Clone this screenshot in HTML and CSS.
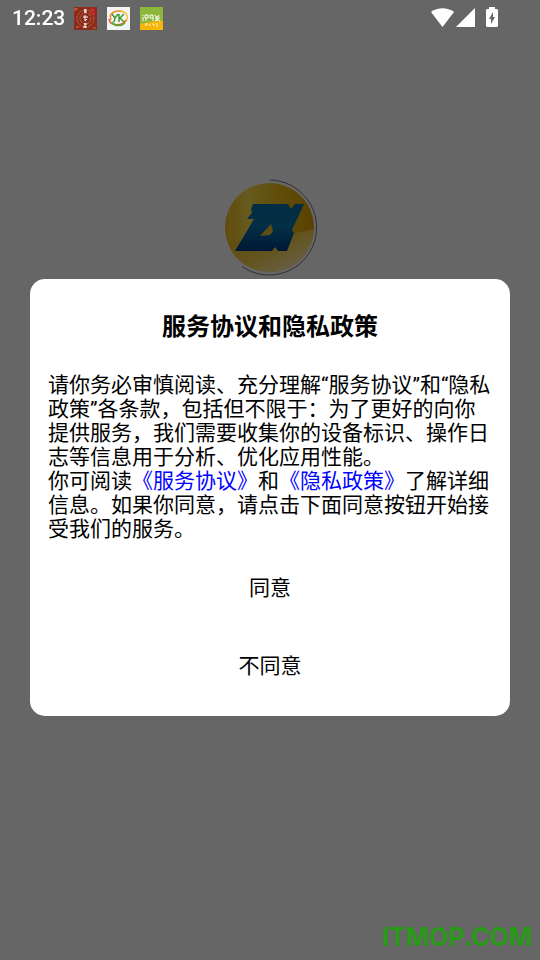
FILE: index.html
```
<!DOCTYPE html>
<html lang="zh-CN">
<head>
    <meta charset="UTF-8">
    <meta name="viewport" content="width=device-width, initial-scale=1.0">
    <title>服务协议和隐私政策</title>
    <link rel="stylesheet" href="styles.css">
</head>
<body>
    <main class="splash">
        <svg class="logo" viewBox="0 0 100 100" aria-hidden="true">
            <defs>
                <linearGradient id="gold" x1="0" y1="0" x2="1" y2="0">
                    <stop offset="0" stop-color="#f0b81c"/>
                    <stop offset=".25" stop-color="#ffe24a"/>
                    <stop offset=".6" stop-color="#f2c21c"/>
                    <stop offset="1" stop-color="#e0a400"/>
                </linearGradient>
                <linearGradient id="shine" x1="0" y1="0" x2="1" y2="1">
                    <stop offset="0" stop-color="#f0b000"/>
                    <stop offset=".5" stop-color="#f8d450"/>
                    <stop offset=".75" stop-color="#ffe9a0"/>
                    <stop offset="1" stop-color="#e89a20"/>
                </linearGradient>
                <linearGradient id="blue" x1="0" y1="0" x2="0" y2="1">
                    <stop offset="0" stop-color="#0870a8"/>
                    <stop offset=".5" stop-color="#0874ac"/>
                    <stop offset="1" stop-color="#003c88"/>
                </linearGradient>
                <clipPath id="disc"><circle cx="49.500" cy="49.500" r="44.500"/></clipPath>
            </defs>
            <circle cx="49.500" cy="49.500" r="44.500" fill="url(#gold)"/>
            <g clip-path="url(#disc)">
                <path d="M0 67C30 60 66 60 100 49V100H0z" fill="url(#shine)"/>
                <path d="M10 20V62" stroke="#fff0a0" stroke-width="1" opacity=".5"/>
            </g>
            <path d="M33 26H68L71 31L75 26H84L72 52L74 55L67 73H58L55 69L52 73H15L34 41H27L30 37L32 35L31 31z" fill="url(#blue)"/>
            <path d="M51 46L53 53L50 57L40 58z" fill="#f0c030"/>
            <path d="M50 2A47.500 47.500 0 1 1 22 88.500" fill="none" stroke="#77727a" stroke-width="1"/>
        </svg>
    </main>

    <header class="status-bar">
        <span class="time">12:23</span>
        <div class="notifications">
            <svg viewBox="0 0 23 23" aria-hidden="true">
                <rect width="23" height="23" fill="#8c2b1c"/>
                <g fill="none" stroke="#b96a4c">
                    <circle cx="11.500" cy="11.500" r="8.500" stroke-dasharray="2 1"/>
                    <circle cx="11.500" cy="11.500" r="5.500" stroke-dasharray="3 1"/>
                </g>
                <path d="M1 2h3M1 1v3M19 21h3M2 20h3" stroke="#c87844"/>
                <path d="M10 3h3M11 2v4M10 5h3M9 10h5M11 8v6M13 12l-2 2M10 17h3M9 20h4M11 16v5" stroke="#fff"/>
                <path d="M17 2h3v2h-3zM16 6h2v2M20 5v3" stroke="#ed2936" fill="none"/>
            </svg>
            <svg viewBox="0 0 23 23" aria-hidden="true">
                <rect width="23" height="23" fill="#f4f4f4"/>
                <g fill="none" stroke-width="1.500">
                    <path d="M4 13C1 6 9 2 17 5" stroke="#f08a24"/>
                    <path d="M14 4C21 5 22 12 18 15" stroke="#f5c535"/>
                    <path d="M2 12C3 20 16 19 19 13" stroke="#e9582b"/>
                    <path d="M5 15C8 20 15 19 18 16" stroke="#4daa36"/>
                    <path d="M5 7L8 11L11 7M8 11L7 15M12 7V15M17 7L13 11L17 15" stroke="#3d9b2f"/>
                </g>
            </svg>
            <svg viewBox="0 0 23 23" aria-hidden="true">
                <rect width="23" height="23" fill="#8db73b"/>
                <path d="M0 17C8 16 15 13 23 14V23H0z" fill="#f5b60b"/>
                <path d="M3 8v1M3 10v4M5 8h3v3H5zM6 11v3M10 8h3v6M10 11h3M10 8v3M15 8l1 2M19 8l-1 2M15 11h5M17 9v5M15 14l2-2 3 2" fill="none" stroke="#fff"/>
                <path d="M5 17h3M6 17v2M9 17l2 2M12 17h2v2M16 17h2M16 19h2" fill="none" stroke="#ffeec0"/>
            </svg>
        </div>
        <div class="indicators">
            <svg class="wifi" viewBox="0 0 23 19" aria-hidden="true">
                <path d="M0 4C7-1 16-1 23 4L11.500 19z" fill="#fff"/>
            </svg>
            <svg class="signal" viewBox="0 0 19 19" aria-hidden="true">
                <path d="M19 0V19H0z" fill="#fff"/>
            </svg>
            <svg class="battery" viewBox="0 0 12 20" aria-hidden="true">
                <path d="M3 2V0H9V2H11L12 3V19L11 20H1L0 19V3L1 2z" fill="#fff"/>
                <path d="M7 5L3 12H5V17L9 10H7z" fill="#666"/>
            </svg>
        </div>
    </header>

    <div class="overlay">
        <section class="dialog" role="dialog" aria-modal="true" aria-labelledby="dialogTitle">
            <h1 class="dialog-title" id="dialogTitle">服务协议和隐私政策</h1>
            <div class="dialog-text">
                <p>请你务必审慎阅读、充分理解“服务协议”和“隐私政策”各条款，包括但不限于：为了更好的向你提供服务，我们需要收集你的设备标识、操作日志等信息用于分析、优化应用性能。</p>
                <p>你可阅读<a href="#terms">《服务协议》</a>和<a href="#privacy">《隐私政策》</a>了解详细信息。如果你同意，请点击下面同意按钮开始接受我们的服务。</p>
            </div>
            <div class="dialog-actions">
                <button type="button" class="dialog-button">同意</button>
                <button type="button" class="dialog-button">不同意</button>
            </div>
        </section>
    </div>

    <div class="watermark">ITMOP.COM</div>
</body>
</html>
```
FILE: styles.css
```
* {
    box-sizing: border-box;
}
body {
    margin: 0;
    min-height: 100vh;
    background: #fff;
    color: #000;
    font-family: Roboto, "Noto Sans CJK SC", sans-serif;
}
.splash {
    display: flex;
    justify-content: center;
    padding-top: 178px;
}
.logo {
    width: 100px;
    height: 100px;
}
.status-bar {
    position: fixed;
    top: 0;
    left: 0;
    right: 0;
    z-index: 2;
    display: flex;
    align-items: center;
    height: 37px;
    padding: 0 42px 0 12px;
    color: #fff;
}
.time {
    font-size: 21px;
    font-weight: 500;
    line-height: 37px;
}
.notifications {
    display: flex;
    gap: 10px;
    margin-left: 9px;
}
.notifications svg {
    width: 23px;
    height: 23px;
}
.indicators {
    display: flex;
    align-items: flex-end;
    margin-left: auto;
    padding-bottom: 3px;
}
.wifi {
    width: 23px;
    height: 19px;
}
.signal {
    width: 19px;
    height: 19px;
    margin-left: 2px;
}
.battery {
    width: 12px;
    height: 20px;
    margin-left: 11px;
}
.overlay {
    position: fixed;
    inset: 0;
    z-index: 1;
    display: flex;
    align-items: center;
    justify-content: center;
    padding: 35px 30px 0;
    background: rgba(0, 0, 0, 0.6);
}
.dialog {
    width: 100%;
    padding: 31px 18px 16px;
    background: #fff;
    border-radius: 15px;
}
.dialog-title {
    margin: 0 0 29px;
    font-size: 24px;
    font-weight: 700;
    line-height: 34px;
    text-align: center;
}
.dialog-text {
    font-size: 21px;
    line-height: 24px;
}
.dialog-text p {
    margin: 0;
}
.dialog-text a {
    color: #00f;
    text-decoration: none;
}
.dialog-actions {
    display: flex;
    flex-direction: column;
    gap: 6px;
    padding-top: 9px;
}
.dialog-button {
    height: 72px;
    padding: 0;
    border: 0;
    background: none;
    color: #000;
    font-family: inherit;
    font-size: 21px;
    cursor: pointer;
}
.watermark {
    position: fixed;
    right: 8px;
    bottom: 5px;
    z-index: 2;
    color: #289b17;
    font-family: Inter, sans-serif;
    font-size: 25px;
    font-weight: 700;
    line-height: 36px;
}
```
